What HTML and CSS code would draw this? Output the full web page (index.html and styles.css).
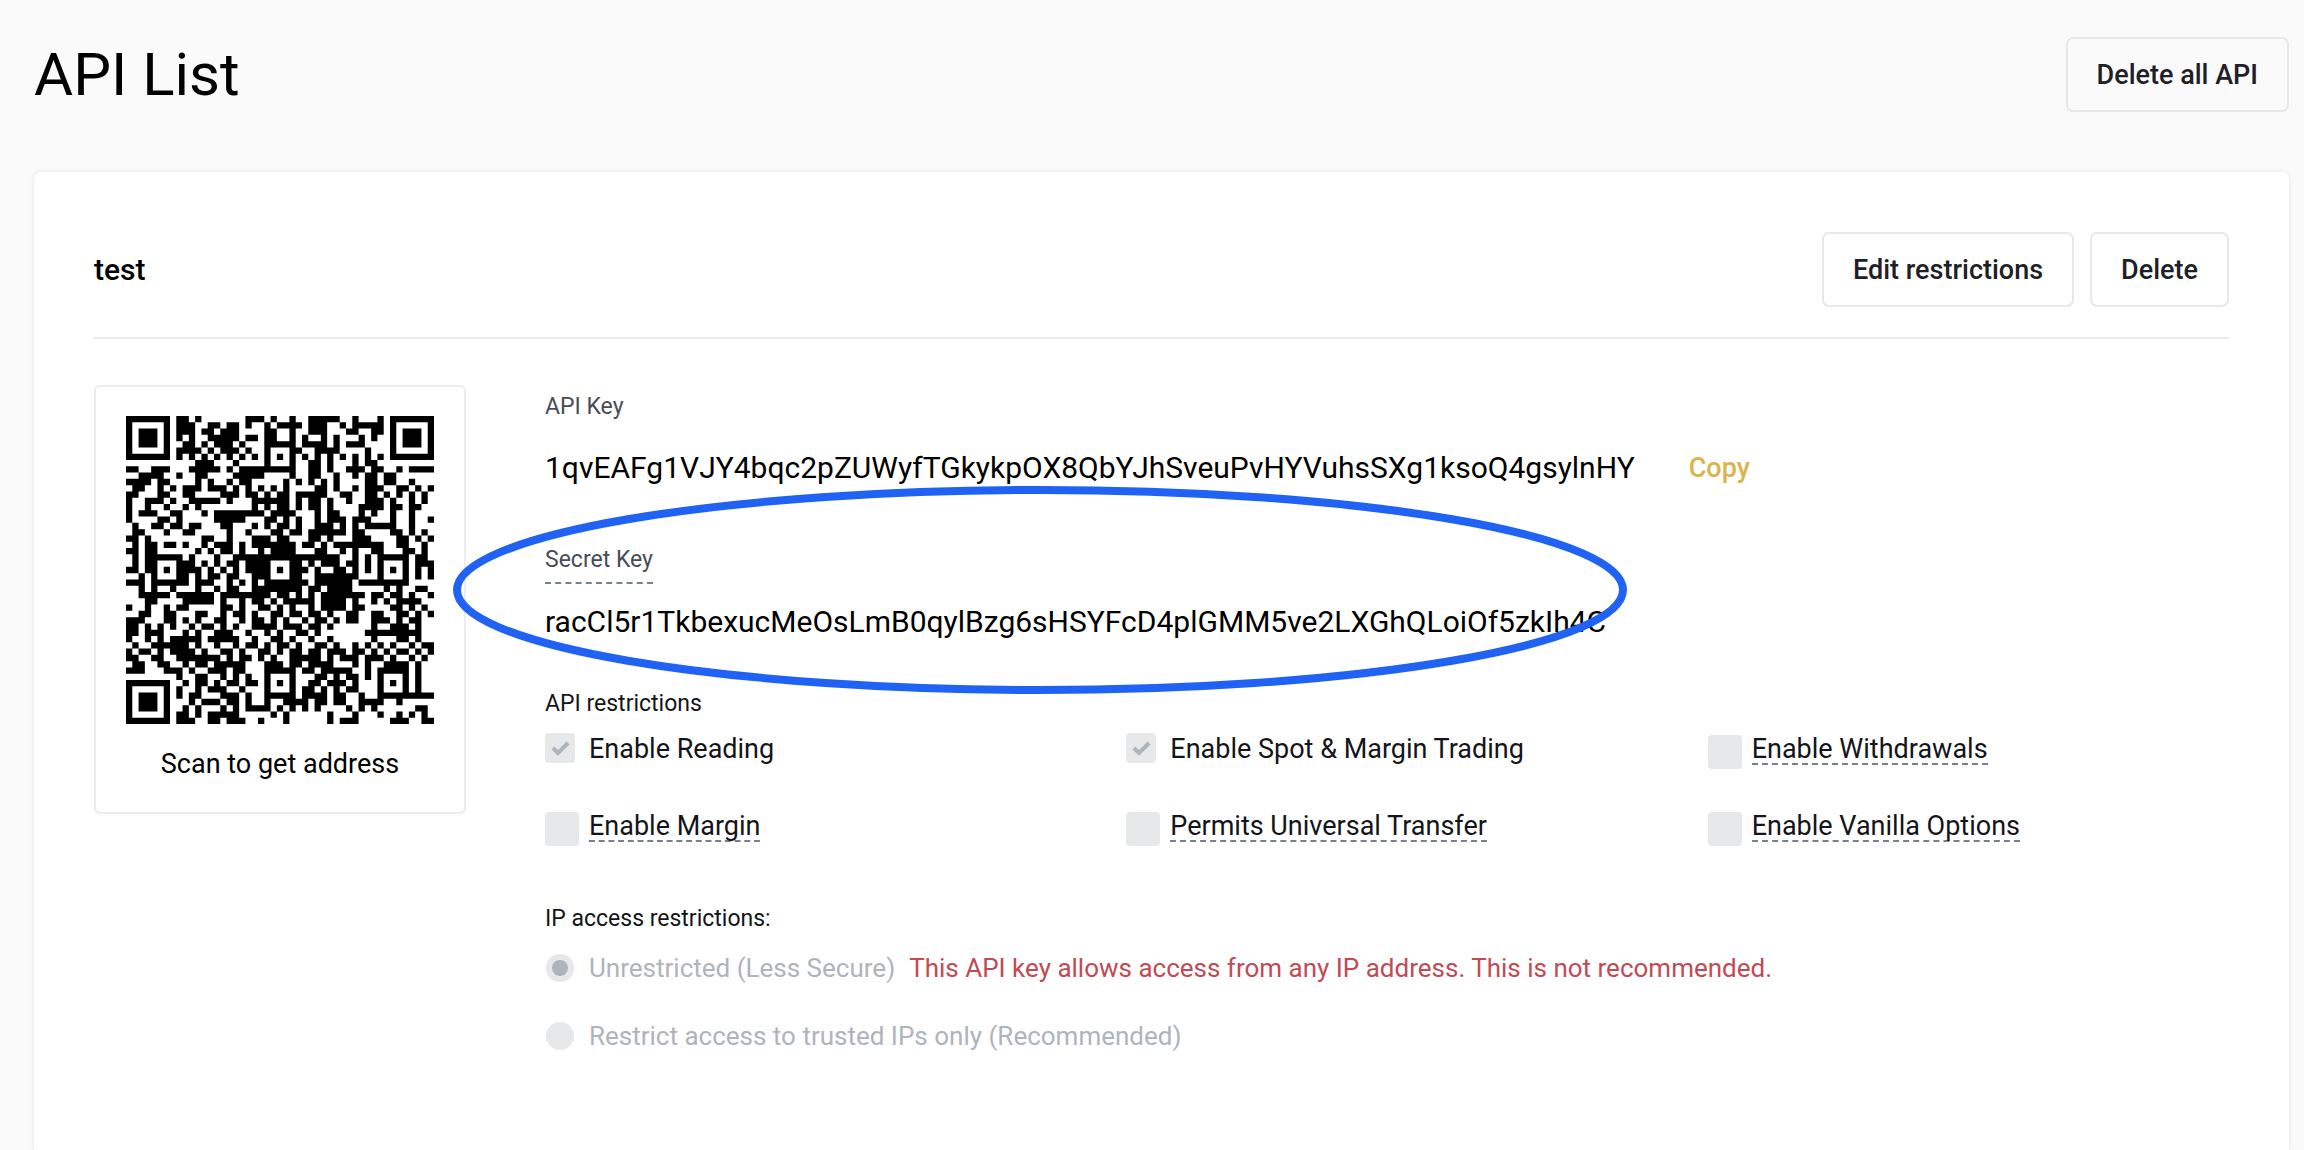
FILE: index.html
```html
<!DOCTYPE html>
<html lang="en">
<head>
  <meta charset="UTF-8">
  <meta name="viewport" content="width=device-width, initial-scale=1.0">
  <title>API List</title>
  <link rel="stylesheet" href="styles.css">
</head>
<body>

  <header class="page-header">
    <h1>API List</h1>
    <button type="button" class="btn">Delete all API</button>
  </header>

  <main class="card">
    <div class="card-header">
      <h2>test</h2>
      <div class="actions">
        <button type="button" class="btn">Edit restrictions</button>
        <button type="button" class="btn">Delete</button>
      </div>
    </div>

    <div class="card-body">
      <div class="qr-box">
        <svg class="qr" viewBox="0 0 49 49" role="img" aria-label="QR code">
          <path id="qr-path" fill="#000" d=""/>
        </svg>
        <p>Scan to get address</p>
      </div>

      <div class="details">
        <div class="label">API Key</div>
        <div class="key-row">
          <span class="key">1qvEAFg1VJY4bqc2pZUWyfTGkykpOX8QbYJhSveuPvHYVuhsSXg1ksoQ4gsylnHY</span>
          <button type="button" class="copy">Copy</button>
        </div>

        <div class="secret">
          <div class="label dashed">Secret Key</div>
          <div class="key">racCl5r1TkbexucMeOsLmB0qylBzg6sHSYFcD4plGMM5ve2LXGhQLoiOf5zkIh4C</div>
          <svg class="highlight" viewBox="0 0 1174 209" aria-hidden="true">
            <ellipse cx="587" cy="104" rx="583" ry="100"/>
          </svg>
        </div>

        <fieldset class="restrictions">
          <legend>API restrictions</legend>
          <div class="options">
            <label class="option"><input type="checkbox" checked disabled><span>Enable Reading</span></label>
            <label class="option"><input type="checkbox" checked disabled><span>Enable Spot &amp; Margin Trading</span></label>
            <label class="option"><input type="checkbox" disabled><span class="hint">Enable Withdrawals</span></label>
            <label class="option"><input type="checkbox" disabled><span class="hint">Enable Margin</span></label>
            <label class="option"><input type="checkbox" disabled><span class="hint">Permits Universal Transfer</span></label>
            <label class="option"><input type="checkbox" disabled><span class="hint">Enable Vanilla Options</span></label>
          </div>
        </fieldset>

        <fieldset class="ip-access">
          <legend>IP access restrictions:</legend>
          <div class="ip-row">
            <label class="ip-option"><input type="radio" name="ip" checked disabled><span>Unrestricted (Less Secure)</span></label>
            <span class="warning">This API key allows access from any IP address. This is not recommended.</span>
          </div>
          <div class="ip-row">
            <label class="ip-option"><input type="radio" name="ip" disabled><span>Restrict access to trusted IPs only (Recommended)</span></label>
          </div>
        </fieldset>
      </div>
    </div>
  </main>

  <script src="qr.js"></script>
</body>
</html>
```

FILE: styles.css
```css
* {
  box-sizing: border-box;
}

body {
  margin: 0;
  background: #fafafa;
  color: #000;
  font-family: Roboto, "Liberation Sans", sans-serif;
  font-size: 27px;
  line-height: 36px;
}

h1, h2, p {
  margin: 0;
}

.page-header {
  display: flex;
  justify-content: space-between;
  align-items: center;
  padding: 37px 15px 60px 34px;
}

h1 {
  font-size: 60px;
  font-weight: 400;
  line-height: 75px;
}

.btn {
  height: 75px;
  padding: 0 29px;
  border: 2px solid #e6e8ea;
  border-radius: 7px;
  background: transparent;
  color: #1e2026;
  font-family: inherit;
  font-size: 27px;
  font-weight: 500;
}

.card {
  margin: 0 15px 0 34px;
  min-height: calc(100vh - 172px);
  padding: 60px 60px 80px;
  background: #fff;
  border-radius: 7px 7px 0 0;
  box-shadow: 0 0 4px rgba(0, 0, 0, 0.1);
}

.card-header {
  display: flex;
  justify-content: space-between;
  align-items: center;
  padding-bottom: 30px;
  border-bottom: 2px solid #eaeaea;
}

h2 {
  font-size: 30px;
  font-weight: 500;
}

.actions {
  display: flex;
  gap: 16px;
}

.card-body {
  display: flex;
  align-items: flex-start;
  gap: 79px;
  padding-top: 46px;
}

.qr-box {
  flex: none;
  padding: 29px 30px 30px;
  border: 2px solid #eaecef;
  border-radius: 6px;
  text-align: center;
}

.qr {
  display: block;
  width: 308px;
  height: 308px;
  margin-bottom: 22px;
}

.details {
  flex: 1;
  min-width: 0;
}

.label {
  color: #474d57;
  font-size: 23px;
  line-height: 44px;
}

.key-row {
  display: flex;
  align-items: center;
  gap: 54px;
  margin: 21px 0 52px;
}

.key {
  font-size: 30px;
  line-height: 36px;
}

.copy {
  padding: 0;
  border: 0;
  background: none;
  color: #d9b44f;
  font-family: inherit;
  font-size: 27px;
  font-weight: 500;
}

.secret {
  position: relative;
}

.dashed {
  display: inline-block;
  margin-bottom: 20px;
  border-bottom: 2px dashed #76808f;
}

/* ellipse around the secret key */
.highlight {
  position: absolute;
  top: -52px;
  left: -92px;
  width: 1174px;
  height: 209px;
  fill: none;
  stroke: #2062f4;
  stroke-width: 8px;
  pointer-events: none;
}

fieldset {
  margin: 0;
  padding: 0;
  border: 0;
}

legend {
  padding: 0;
  color: #14151a;
  font-size: 23px;
}

.restrictions {
  margin-top: 46px;
}

.options {
  display: grid;
  grid-template-columns: repeat(3, 1fr);
  gap: 41px 60px;
  padding-top: 9px;
}

.option {
  display: flex;
  align-items: flex-start;
  height: 36px;
  color: #14151a;
}

.option input {
  appearance: none;
  flex: none;
  width: 34px;
  height: 34px;
  margin: 4px 10px 0 0;
  border-radius: 4px;
  background: #e6e8ea;
}

.option input:checked {
  width: 30px;
  height: 30px;
  margin: 2px 14px 0 0;
  background: #e6e8ea url("data:image/svg+xml,%3Csvg xmlns='http://www.w3.org/2000/svg' viewBox='0 0 30 30'%3E%3Cpath d='M8 15l5 5 10-10' fill='none' stroke='%23aeb4bc' stroke-width='4'/%3E%3C/svg%3E");
}

.hint {
  height: 34px;
  border-bottom: 2px dashed #76808f;
}

.ip-access {
  margin-top: 57px;
}

.ip-row {
  display: flex;
  gap: 14px;
  padding-top: 32px;
  font-size: 26px;
}

.ip-row:first-of-type {
  padding-top: 13px;
}

.ip-option {
  display: flex;
  align-items: center;
  color: #aeb4bc;
}

.ip-option input {
  appearance: none;
  width: 28px;
  height: 28px;
  margin: 0 15px 0 1px;
  border-radius: 50%;
  background: #e6e8ea;
}

.ip-option input:checked {
  border: 6px solid #e6e8ea;
  background: #aeb4bc;
}

.warning {
  color: #c24a54;
}
```

FILE: qr.js
```js
const rows = [
  "####### .##.#.. .....## #.#..#. .#####. .#...#. #######",
  "#.....# .###..# #.##.#. .#.#### .###..# .#####. #.....#",
  "#.###.# .###.## .###... .##..#. .###... ##..##. #.###.#",
  "#.###.# .#.#..# ####.## .##..#. #..#.#. ..#.#.. #.###.#",
  "#.###.# ..##.#. ###.#.. .#####. ####.#. ###.... #.###.#",
  "#.....# .####.# .###.#. .#...## ..####. ...#... #.....#",
  "####### .#.#.#. #.#.#.# .#.#.#. #.#.#.# .#.#.#. #######",
  "....... ....### ...#... .#...#. .##.#.. .#.##.. .......",
  "##..### ...#### #.#.### ######. .##.#.. ###.##. .#.####",
  "..####. .#..##. ...#### #....#. .##..#. .#.##.# #......",
  "####.## ....#.# ..#.##. ....#.# .#.#.#. ...##.# #..#...",
  ".##..#. #.###.# ##.#.#. #.#.#.. ..##.#. .#.###. .##.#.#",
  "##...## ..##... .###.## .#.##.# ####..# #..##.# .#.#.#.",
  "#..###. #..#### #.#...# #####.# .##.#.. #..###. #..#.#.",
  "#..#..# ..#.#.. ......# .#.##.# .##.#.. ..####. ##.##..",
  "#.###.. ##...#. ####### #.####. ..#.##. ..#.#.. #..#...",
  "#....## .#..... #####.. .##.#.# ..#.### .###... #..#..#",
  ".#..##. ##.##.. .##...# .#.##.# ..###.# .#.#### #..#...",
  ".##...# ..##... ..#..#. ..##.## .###### .##.... ##.#.#.",
  "##.#... .....## ..#...# ##.##.. .##.#.. .###... .##.#.#",
  ".#.##.# #.#..#. ###.#.# ######. ##.#.## ######. .##..#.",
  "##.##.. ....#.# .##.#.. #.####. ..##..# .#..##. ..##.#.",
  ".#.#### ##.#... #..#### ####### ######. .#.#.## ###.##.",
  ".#.##.. .###.#. #.##.## ##...## .#.###. ##.#.#. ..#.###",
  "##.##.# .####.# .#.#.## ##.#.## #.#..## .#.#.#. #.#.#.#",
  "..#.#.. .##.#.# #.##..# ##...## ..##### ##...#. ..#.#.#",
  "###.### ###.### ..#.#.# .###### #.##### #.##### ###....",
  "..#.#.. #...#.. #.##..# ####### .##.### #.....# .#..##.",
  "..##### .###### .###### ##.##.# .#.#### ###.##. ##.#..#",
  "...##.. ..##### .#..#.# #.#.### ##.#### .#..#.# .####..",
  "#..#..# .##.... .##.#.. ##.#.#. .#.#### .##.... ##.#.#.",
  "..##..# #...##. .#.##.# ..##.## .##.#.. ##..##. .##.#.#",
  "###...# #.#.#.. ##..#.# #.#.#.. #.##.#. ##..### .#.##..",
  "##.#.#. #..#.## .#.#..# ###.### .##.#.. ....#.. ###.#..",
  "##.###. ..#.#.. ###..#. .#.#..# #.#.... ...#### #####..",
  "#..#.#. #####.# ####..# ..##.#. .#..#.. ....#.. .##.#..",
  ".#..### ###.#.. #..#.## .#.##.# ..##.#. .#.#.#. #..#.##",
  "#.##.#. ####.#. .##.#.. ##.#.## .##.### .##.#.# .##.#.#",
  "##..##. .###### #.#.##. #.#..## ###.#.# ##.###. #..#.#.",
  ".##..## ..#.##. #####.. .###.## .####.. .#.#..# ###.#..",
  "###...# ##.#..# ##.##.. .#####. ##.#### #..#.## ###.#..",
  "....... .#..##. .#.#.#. .#...#. ..##.#. ##.#.#. ..#.#..",
  "####### ..#.##. #.##.## .#.#.#. .##.### .#...#. #.#.#..",
  "#.....# .#..#.# ##..#.. .#...#. ##.#.#. ##...#. ..#.#..",
  "#.###.# .#.##.. .###.#. .#####. ####.## ..#..## #######",
  "#.###.# ...#.## #.##.#. .#..### #.##.## ..####. .#.....",
  "#.###.# ..#.#.. .#.#.## ##.#.#. #.#.... #.#.#.. ....##.",
  "#.....# .##.#.# ####... ..#.#.. ....#.. .#...#. .#.#.#.",
  "####### .###..# #.###.. #...#.. ....#.# ##..... ###..##"
];

// one square per dark module
let d = "";
rows.forEach((row, y) => {
  [...row.replaceAll(" ", "")].forEach((cell, x) => {
    if (cell === "#") d += `M${x} ${y}h1v1h-1z`;
  });
});
document.getElementById("qr-path").setAttribute("d", d);
```
